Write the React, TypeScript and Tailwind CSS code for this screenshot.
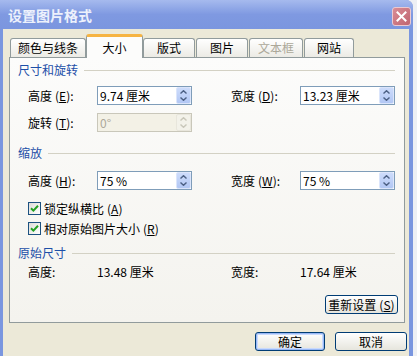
import React from "react";

const FONT = { fontFamily: '"Noto Sans CJK SC", "Liberation Sans", sans-serif' };

function Chevron({ up, color }: { up?: boolean; color: string }) {
  return (
    <svg width="7" height="4" viewBox="0 0 7 4" className="block">
      {up ? (
        <path d="M0.5 3.5 L3.5 0.7 L6.5 3.5" fill="none" stroke={color} strokeWidth="1.4" />
      ) : (
        <path d="M0.5 0.5 L3.5 3.3 L6.5 0.5" fill="none" stroke={color} strokeWidth="1.4" />
      )}
    </svg>
  );
}

function Spinner({ disabled }: { disabled?: boolean }) {
  const c = disabled ? "#c9c7ba" : "#4d6185";
  return (
    <div
      className={`w-[15px] h-[17px] rounded-[2px] border flex flex-col items-center justify-center gap-[3px] ${
        disabled
          ? "border-[#e8e6dc] bg-[#f3f2ea]"
          : "border-[#dbe5fb] bg-gradient-to-b from-[#cddcfb] to-[#b2c7f4]"
      }`}
    >
      <Chevron up color={c} />
      <Chevron color={c} />
    </div>
  );
}

function Field({ value, disabled }: { value: string; disabled?: boolean }) {
  return (
    <div
      className={`w-[95px] h-[19px] border flex items-center ${
        disabled ? "border-[#c9c7ba] bg-[#f3f1e6] text-[#aca899]" : "border-[#7f9db9] bg-white text-black"
      }`}
    >
      <span className="flex-1 pl-[2px] text-[12px] leading-none whitespace-pre">{value}</span>
      <Spinner disabled={disabled} />
    </div>
  );
}

function Label({ text, k }: { text: string; k?: string }) {
  return (
    <div className="w-[69px] shrink-0 text-[12px] leading-none text-black whitespace-nowrap">
      {text}
      {k ? (
        <>
          <span className="ml-[3px]">(</span>
          <span className="underline">{k}</span>
          <span>):</span>
        </>
      ) : (
        <span>:</span>
      )}
    </div>
  );
}

function Heading({ text }: { text: string }) {
  return (
    <div className="h-[14px] flex items-center gap-[6px]">
      <span className="text-[12px] leading-none text-[#1d4fa8] whitespace-nowrap">{text}</span>
      <div className="flex-1 h-[1px] bg-[#d3d1c4] mt-[1px]" />
    </div>
  );
}

function Check({ label, k }: { label: string; k: string }) {
  return (
    <div className="h-[13px] flex items-center pl-[10px] gap-[3px]">
      <div className="w-[13px] h-[13px] border border-[#1c5180] bg-gradient-to-br from-[#dcdcd7] to-white flex items-center justify-center">
        <svg width="9" height="9" viewBox="0 0 9 9">
          <path d="M1 4.2 L3.4 6.6 L8 1.8" fill="none" stroke="#21a121" strokeWidth="2" />
        </svg>
      </div>
      <span className="text-[12px] leading-none text-black whitespace-nowrap">
        {label}
        <span className="ml-[3px]">(</span>
        <span className="underline">{k}</span>)
      </span>
    </div>
  );
}

function Tab({ text, w, ml, disabled }: { text: string; w: string; ml?: string; disabled?: boolean }) {
  return (
    <div
      className={`${w} ${ml ?? ""} h-[19px] border border-b-0 border-[#919b9c] rounded-t-[3px] bg-gradient-to-b from-white to-[#ecebe5] flex items-center justify-center text-[12px] leading-none ${
        disabled ? "text-[#aca899]" : "text-black"
      }`}
    >
      {text}
    </div>
  );
}

function Btn({ text, w, def }: { text: React.ReactNode; w: string; def?: boolean }) {
  return (
    <div
      className={`${w} h-[19px] rounded-[3px] border border-[#003c74] flex items-center justify-center text-[12px] leading-none text-black bg-gradient-to-b from-white to-[#e6e5dd] ${
        def ? "shadow-[inset_0_0_0_1px_#98b8f6,inset_0_0_0_2px_#c9dafd]" : ""
      }`}
    >
      {text}
    </div>
  );
}

export default function App() {
  return (
    <div className="w-[417px] h-[356px] bg-[#eef0f4] flex" style={FONT}>
      <div className="w-[413px] h-[356px] bg-[#7a96df] rounded-tr-[7px] flex flex-col overflow-hidden">
        <div className="h-[29px] flex items-center pl-[8px] pr-[2px] bg-gradient-to-b from-[#a6baee] via-[#7f99e1] to-[#7b96df]">
          <span className="text-[14px] font-bold text-[#edf1fc] leading-none">设置图片格式</span>
          <div className="ml-auto self-start mt-[7px] w-[19px] h-[19px] rounded-[3px] border border-[#ecc9cf] bg-gradient-to-br from-[#d98d96] to-[#c06470] flex items-center justify-center">
            <svg width="11" height="11" viewBox="0 0 11 11">
              <path d="M1.5 1.5 L9.5 9.5 M9.5 1.5 L1.5 9.5" stroke="white" strokeWidth="2" strokeLinecap="square" />
            </svg>
          </div>
        </div>
        <div className="flex-1 ml-[3px] mr-[4px] bg-[#ece9d8] pt-[5px] pl-[6px] pr-[2px] flex flex-col">
          <div className="h-[23px] flex items-end pl-[1px] mr-[2px]">
            <Tab text="颜色与线条" w="w-[76px]" />
            <div className="w-[57px] h-[24px] -mb-[1px] relative z-10 border border-b-0 border-[#919b9c] border-t-[3px] border-t-[#f6b443] rounded-t-[3px] bg-[#fcfcfb] flex items-center justify-center text-[12px] leading-none text-black">
              大小
            </div>
            <Tab text="版式" w="w-[52px]" />
            <Tab text="图片" w="w-[52px]" ml="ml-[1px]" />
            <Tab text="文本框" w="w-[54px]" ml="ml-[1px]" disabled />
            <Tab text="网站" w="w-[50px]" ml="ml-[1px]" />
          </div>
          <div className="h-[266px] mr-[2px] border border-[#919b9c] bg-gradient-to-b from-[#fcfcfb] to-[#f4f3ee] flex flex-col pl-[8px] pr-[9px] pt-[5px]">
            <Heading text="尺寸和旋转" />
            <div className="mt-[9px] h-[19px] flex items-center pl-[10px]">
              <Label text="高度" k="E" />
              <Field value="9.74 厘米" />
              <div className="ml-[39px]">
                <Label text="宽度" k="D" />
              </div>
              <Field value="13.23 厘米" />
            </div>
            <div className="mt-[8px] h-[19px] flex items-center pl-[10px]">
              <Label text="旋转" k="T" />
              <Field value="0°" disabled />
            </div>
            <div className="mt-[14px]">
              <Heading text="缩放" />
            </div>
            <div className="mt-[11px] h-[19px] flex items-center pl-[10px]">
              <Label text="高度" k="H" />
              <Field value="75 %" />
              <div className="ml-[39px]">
                <Label text="宽度" k="W" />
              </div>
              <Field value="75 %" />
            </div>
            <div className="mt-[12px]">
              <Check label="锁定纵横比" k="A" />
            </div>
            <div className="mt-[7px]">
              <Check label="相对原始图片大小" k="R" />
            </div>
            <div className="mt-[11px]">
              <Heading text="原始尺寸" />
            </div>
            <div className="mt-[5px] h-[14px] flex items-center pl-[10px] text-[12px] leading-none text-black">
              <div className="w-[69px]">高度:</div>
              <div className="w-[95px] whitespace-pre">13.48 厘米</div>
              <div className="ml-[39px] w-[69px]">宽度:</div>
              <div className="whitespace-pre">17.64 厘米</div>
            </div>
            <div className="mt-[16px] flex justify-end -mr-[3px]">
              <Btn
                w="w-[73px]"
                text={
                  <span>
                    重新设置<span className="ml-[3px]">(</span>
                    <span className="underline">S</span>)
                  </span>
                }
              />
            </div>
          </div>
          <div className="mt-[9px] flex justify-end gap-[10px]">
            <Btn text="确定" w="w-[70px]" def />
            <Btn text="取消" w="w-[72px]" />
          </div>
        </div>
      </div>
    </div>
  );
}
